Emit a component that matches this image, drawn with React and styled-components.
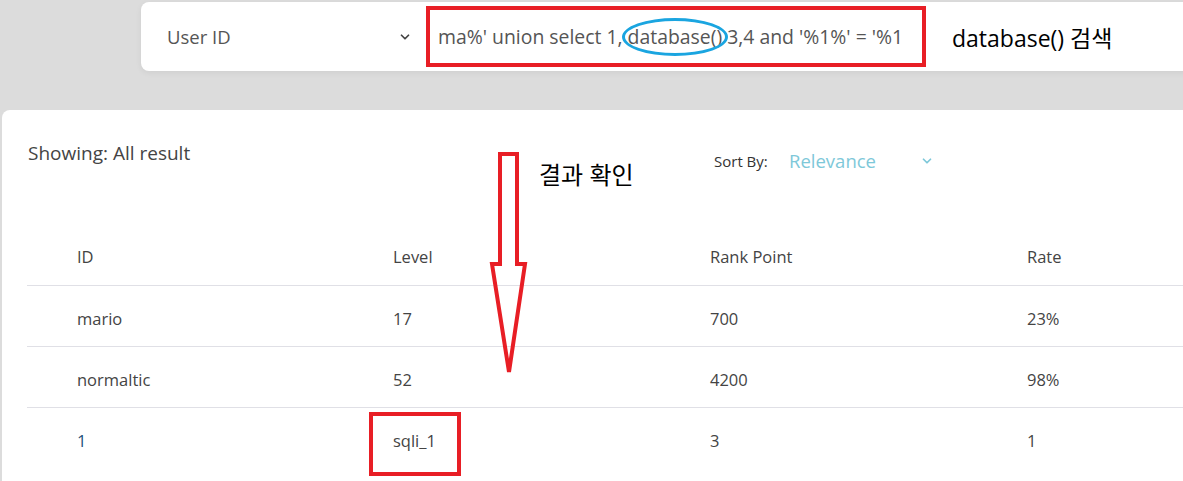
import React from "react";
import styled, { createGlobalStyle } from "styled-components";

const Global = createGlobalStyle`
  html, body { margin: 0; padding: 0; }
  body {
    background: #dcdcdc;
    font-family: "Open Sans", "Noto Sans CJK KR", sans-serif;
    overflow: hidden;
    width: 1183px;
    height: 481px;
  }
`;

const Page = styled.div`
  display: flex;
  flex-direction: column;
  width: 1183px;
  height: 481px;
  overflow: hidden;
`;

const SearchCard = styled.div`
  margin: 2px 0 0 141px;
  height: 69px;
  width: 1100px;
  flex-shrink: 0;
  background: #fff;
  border-radius: 8px 0 0 8px;
  box-shadow: 0 2px 6px rgba(0, 0, 0, 0.06);
  display: flex;
  align-items: center;
`;

const Select = styled.div`
  width: 285px;
  box-sizing: border-box;
  padding: 0 14px 0 26px;
  display: flex;
  align-items: center;
  color: #555;
  font-size: 18.5px;
`;

const SelectLabel = styled.span`
  flex: 1;
`;

const Chevron = ({ color = "#444", size = 14 }) => (
  <svg width={size} height={size} viewBox="0 0 24 24" fill="none" stroke={color} strokeWidth="3" strokeLinecap="round" strokeLinejoin="round">
    <path d="M6 9l6 6 6-6" />
  </svg>
);

const QueryBox = styled.div`
  width: 500px;
  height: 61px;
  box-sizing: border-box;
  border: 4px solid #e81e25;
  padding-left: 8px;
  display: flex;
  align-items: center;
  color: #555;
  font-size: 19.4px;
  white-space: nowrap;
  overflow: visible;
`;

const Circled = styled.span`
  position: relative;
  &::after {
    content: "";
    position: absolute;
    left: -6px;
    right: -6px;
    top: -5px;
    bottom: -6px;
    border: 3.5px solid #1aa5e0;
    border-radius: 50%;
  }
`;

const Note = styled.span`
  font-size: 23px;
  color: #000;
  white-space: nowrap;
  margin-left: ${(p) => p.$ml || 0}px;
`;

const ResultCard = styled.div`
  position: relative;
  margin: 39px 0 0 2px;
  flex: 1;
  background: #fff;
  border-radius: 8px 0 0 0;
  padding-top: 30px;
`;

const Toolbar = styled.div`
  display: flex;
  align-items: flex-start;
  padding-left: 26px;
  height: 88px;
`;

const Showing = styled.div`
  width: 686px;
  font-size: 19px;
  color: #444;
`;

const SortGroup = styled.div`
  display: flex;
  align-items: center;
  margin-top: 8px;
`;

const SortLabel = styled.span`
  font-size: 15px;
  color: #333;
  width: 75px;
`;

const SortSelect = styled.div`
  display: flex;
  align-items: center;
  width: 145px;
  justify-content: space-between;
  color: #7ec8d9;
  font-size: 18.5px;
`;

const Table = styled.div`
  margin-left: 25px;
  display: grid;
  grid-template-columns: 316px 317px 317px 1fr;
`;

const Cell = styled.div`
  padding-left: 50px;
  height: ${(p) => (p.$head ? 58 : 61)}px;
  display: flex;
  align-items: center;
  padding-top: ${(p) => (p.$head ? 0 : 4)}px;
  box-sizing: border-box;
  border-bottom: ${(p) => (p.$last ? "none" : "1px solid #e0e0e6")};
  font-size: 16.5px;
  color: ${(p) => p.$color || "#444"};
`;

const Boxed = styled.span`
  position: relative;
  &::after {
    content: "";
    position: absolute;
    left: -24px;
    right: -25px;
    top: -17px;
    bottom: -24px;
    border: 4px solid #e81e25;
  }
`;

const ArrowLayer = styled.svg`
  position: absolute;
  left: 480px;
  top: 38px;
`;

const ResultNote = styled(Note)`
  position: absolute;
  left: 537px;
  top: 46px;
  font-size: 24px;
`;

const rows = [
  ["mario", "17", "700", "23%"],
  ["normaltic", "52", "4200", "98%"],
  ["1", "sqli_1", "3", "1"],
];

export default function App() {
  return (
    <Page>
      <Global />
      <SearchCard>
        <Select>
          <SelectLabel>User ID</SelectLabel>
          <Chevron />
        </Select>
        <QueryBox>
          ma%' union select 1,&nbsp;<Circled>database()</Circled>&nbsp;3,4 and '%1%' = '%1
        </QueryBox>
        <Note $ml={26}>database() 검색</Note>
      </SearchCard>
      <ResultCard>
        <Toolbar>
          <Showing>Showing: All result</Showing>
          <SortGroup>
            <SortLabel>Sort By:</SortLabel>
            <SortSelect>
              <span>Relevance</span>
              <Chevron color="#7ec8d9" />
            </SortSelect>
          </SortGroup>
        </Toolbar>
        <Table>
          {["ID", "Level", "Rank Point", "Rate"].map((h) => (
            <Cell key={h} $head>{h}</Cell>
          ))}
          {rows.map((r, i) =>
            r.map((v, j) => {
              const last = i === rows.length - 1;
              const content = last && j === 1 ? <Boxed>{v}</Boxed> : v;
              return (
                <Cell key={i + "-" + j} $last={last} $color={last && j === 0 ? "#1f4f7a" : undefined}>
                  {content}
                </Cell>
              );
            })
          )}
        </Table>
        <ResultNote>결과 확인</ResultNote>
        <ArrowLayer width="60" height="240" viewBox="0 0 60 240">
          <path
            d="M18 6 L35 6 L35 116 L43 116 L27 224 L10 116 L18 116 Z"
            fill="none"
            stroke="#e81e25"
            strokeWidth="4"
            strokeLinejoin="miter"
          />
        </ArrowLayer>
      </ResultCard>
    </Page>
  );
}
